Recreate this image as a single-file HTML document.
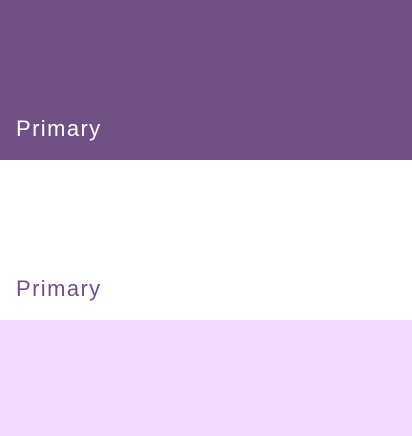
<!DOCTYPE html>
<html><head><style>
body{margin:0;width:412px;height:436px;overflow:hidden;font-family:"Liberation Sans",sans-serif}
.b{position:absolute;left:0;width:412px}
.t{position:absolute;left:16px;font-size:22px;line-height:22px;letter-spacing:1.4px}
</style></head><body>
<div class="b" style="top:0;height:160px;background:#6f5186"></div>
<div class="t" style="top:118px;color:#fff">Primary</div>
<div class="b" style="top:160px;height:160px;background:#fff"></div>
<div class="t" style="top:278px;color:#6f5186">Primary</div>
<div class="b" style="top:320px;height:116px;background:#eedbff"></div>
</body></html>
